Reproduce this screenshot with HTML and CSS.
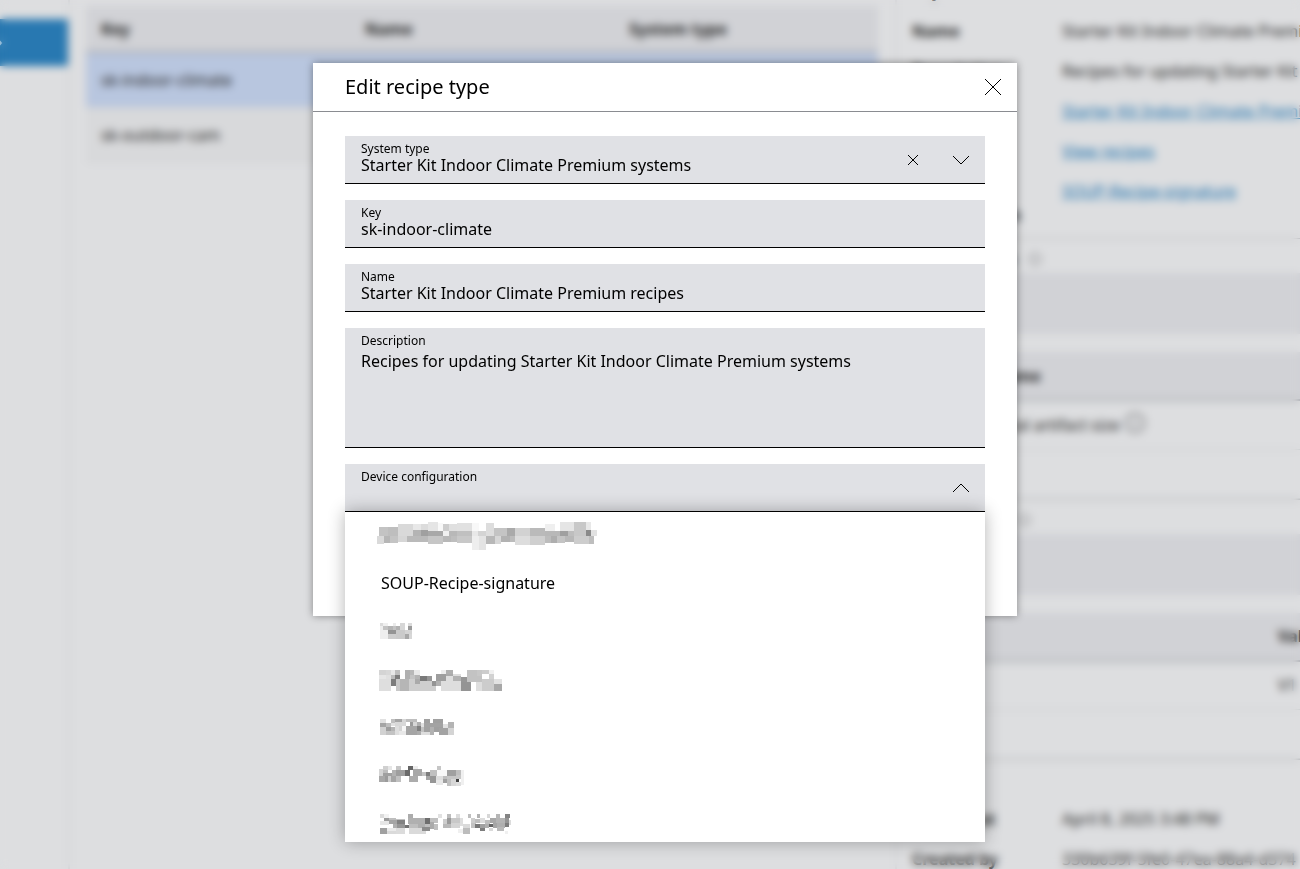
FILE: index.html
```html
<!DOCTYPE html>
<html lang="en">

<head>
    <meta charset="utf-8">
    <title>Edit recipe type</title>
    <link rel="stylesheet" href="styles.css">
</head>

<body>
    <div class="page">
        <nav class="sidebar">
            <a class="sidebar-item" href="#" aria-label="Recipe types">
                <svg width="12" height="12" viewBox="0 0 12 12"><path d="M3 1l5 5-5 5" /></svg>
            </a>
        </nav>
        <main class="list">
            <table class="list-table">
                <thead>
                    <tr>
                        <th>Key</th>
                        <th>Name</th>
                        <th>System type</th>
                    </tr>
                </thead>
                <tbody>
                    <tr class="active">
                        <td>sk-indoor-climate</td>
                        <td></td>
                        <td></td>
                    </tr>
                    <tr>
                        <td>sk-outdoor-cam</td>
                        <td></td>
                        <td></td>
                    </tr>
                </tbody>
            </table>
        </main>
        <aside class="details">
            <dl>
                <dt>Key</dt>
                <dd>sk-indoor-climate</dd>
                <dt>Name</dt>
                <dd>Starter Kit Indoor Climate Premium recipes</dd>
                <dt>Description</dt>
                <dd>Recipes for updating Starter Kit Indoor Climate Premium systems</dd>
                <dt>System type</dt>
                <dd><a href="#">Starter Kit Indoor Climate Premium systems</a></dd>
                <dt>Recipes</dt>
                <dd><a href="#">View recipes</a></dd>
                <dt>Device configuration</dt>
                <dd><a href="#">SOUP-Recipe-signature</a></dd>
            </dl>
            <section>
                <h2>Update settings
                    <svg class="info" width="14" height="14" viewBox="0 0 14 14"><circle cx="7" cy="7" r="6" /><path d="M7 6v4M7 4v1" /></svg>
                </h2>
                <div class="toolbar"></div>
                <table class="props">
                    <tr>
                        <th>Name</th>
                        <th></th>
                    </tr>
                    <tr>
                        <td>Total artifact size
                            <svg class="info big" width="22" height="22" viewBox="0 0 14 14"><circle cx="7" cy="7" r="6" /><path d="M7 6v4M7 4v1" /></svg>
                        </td>
                        <td></td>
                    </tr>
                    <tr>
                        <td></td>
                        <td></td>
                    </tr>
                </table>
            </section>
            <section>
                <h2>User variables
                    <svg class="info" width="14" height="14" viewBox="0 0 14 14"><circle cx="7" cy="7" r="6" /><path d="M7 6v4M7 4v1" /></svg>
                </h2>
                <div class="toolbar"></div>
                <table class="props">
                    <tr>
                        <th></th>
                        <th>Value</th>
                    </tr>
                    <tr>
                        <td></td>
                        <td>V1</td>
                    </tr>
                    <tr>
                        <td></td>
                        <td></td>
                    </tr>
                </table>
            </section>
            <dl class="meta">
                <dt>Created at</dt>
                <dd>April 8, 2025 3:48 PM</dd>
                <dt>Created by</dt>
                <dd>330b639f-5fe0-47ea-88a4-d374</dd>
            </dl>
        </aside>
    </div>

    <div class="overlay">
        <form class="dialog" role="dialog" aria-labelledby="dialog-title">
            <div class="dialog-header">
                <h1 id="dialog-title">Edit recipe type</h1>
                <button type="button" class="icon-button" aria-label="Close">
                    <svg width="16" height="16" viewBox="0 0 16 16"><path d="M0 0l16 16M16 0L0 16" /></svg>
                </button>
            </div>
            <div class="dialog-body">
                <div class="field">
                    <label for="system-type">System type</label>
                    <select id="system-type">
                        <option>Starter Kit Indoor Climate Premium systems</option>
                    </select>
                    <div class="field-icons">
                        <button type="button" class="icon-button" aria-label="Clear">
                            <svg width="10" height="10" viewBox="0 0 10 10"><path d="M0 0l10 10M10 0L0 10" /></svg>
                        </button>
                        <svg width="16" height="8" viewBox="0 0 16 8"><path d="M0 0l8 8 8-8" /></svg>
                    </div>
                </div>
                <div class="field">
                    <label for="key">Key</label>
                    <input type="text" id="key" value="sk-indoor-climate">
                </div>
                <div class="field">
                    <label for="name">Name</label>
                    <input type="text" id="name" value="Starter Kit Indoor Climate Premium recipes">
                </div>
                <div class="field">
                    <label for="description">Description</label>
                    <textarea id="description">Recipes for updating Starter Kit Indoor Climate Premium systems</textarea>
                </div>
                <div class="field">
                    <label for="device-config">Device configuration</label>
                    <select id="device-config">
                        <option></option>
                    </select>
                    <div class="field-icons">
                        <svg width="16" height="8" viewBox="0 0 16 8"><path d="M0 8l8-8 8 8" /></svg>
                    </div>
                    <ul class="options" role="listbox" aria-label="Device configuration">
                        <li role="option"><svg class="masked" viewBox="18 -3 648 96"></svg></li>
                        <li role="option">SOUP-Recipe-signature</li>
                        <li role="option"><svg class="masked" viewBox="18 -9 648 96"></svg></li>
                        <li role="option"><svg class="masked" viewBox="18 135 648 96"></svg></li>
                        <li role="option"><svg class="masked" viewBox="18 279 648 96"></svg></li>
                        <li role="option"><svg class="masked" viewBox="18 423 648 96"></svg></li>
                        <li role="option"><svg class="masked" viewBox="18 567 648 96"></svg></li>
                    </ul>
                </div>
            </div>
        </form>
    </div>
    <script src="script.js"></script>
</body>

</html>
```
FILE: styles.css
```css
* {
    box-sizing: border-box;
}

body {
    margin: 0;
    height: 100vh;
    overflow: hidden;
    background-color: #dddee0;
    color: #000;
    font-family: "Noto Sans", sans-serif;
    font-size: 16px;
    line-height: 24px;
}

h1,
h2,
dl,
dd,
ul {
    margin: 0;
    padding: 0;
}

svg {
    display: block;
    fill: none;
    stroke: #000;
}

/* page behind the dialog, scrolled down a bit */
.page {
    display: flex;
    margin-top: -29px;
    min-height: calc(100vh + 29px);
    color: #222;
}

.sidebar {
    flex: none;
    width: 70px;
    padding-top: 48px;
    border-right: 2px solid #d0d1d4;
}

.sidebar-item {
    display: flex;
    align-items: center;
    height: 47px;
    background-color: #2878b1;
}

.sidebar-item svg {
    margin-left: -7px;
    stroke: #fff;
    stroke-width: 2;
}

.list {
    flex: none;
    width: 825px;
    padding: 35px 17px 0 16px;
}

table {
    border-collapse: collapse;
    table-layout: fixed;
    width: 100%;
}

th,
td {
    padding: 0 15px;
    text-align: left;
    white-space: nowrap;
}

.list-table th {
    height: 46px;
    background-color: #d1d2d6;
    border-bottom: 2px solid #a4a6ab;
}

.list-table td {
    height: 55px;
    background-color: #d8d9db;
    border-bottom: 1px solid #d0d1d4;
}

.list-table .active td {
    background-color: #b8c6df;
}

.details {
    flex: 1;
    min-width: 0;
    overflow: hidden;
    border-left: 2px solid #d3d4d7;
}

dl {
    display: grid;
    grid-template-columns: 134px 1fr;
    column-gap: 16px;
    row-gap: 16px;
    padding: 8px 0 11px 15px;
}

dt,
th {
    font-weight: 700;
}

dd {
    white-space: nowrap;
}

a {
    color: #1c73ae;
}

section {
    border-top: 1px solid #b0b1b5;
}

h2 {
    display: flex;
    align-items: center;
    gap: 12px;
    padding: 8px 0 2px 15px;
    font-size: 14px;
    font-weight: 400;
}

.info {
    stroke: #66676a;
}

.toolbar {
    height: 61px;
    margin-bottom: 18px;
    background-color: #d1d2d6;
}

.props th {
    height: 48px;
    background-color: #d1d2d6;
    border-bottom: 2px solid #a4a6ab;
}

.props td {
    height: 49px;
    border-bottom: 1px solid #c6c8ca;
}

.props tr > :first-child {
    width: 366px;
    padding-left: 96px;
}

.big {
    display: inline-block;
    vertical-align: middle;
    margin-top: -6px;
}

.meta {
    padding-top: 47px;
    border-top: 1px solid #b0b1b5;
}

/* dialog */
.overlay {
    position: fixed;
    inset: 0;
    display: flex;
    justify-content: center;
    align-items: flex-start;
    padding: 63px 0 0 30px;
    backdrop-filter: blur(4px);
}

.dialog {
    width: 100%;
    max-width: 704px;
    background-color: #fff;
    box-shadow: 0 0 8px rgba(0, 0, 0, 0.4);
}

.dialog-header {
    display: flex;
    justify-content: space-between;
    align-items: center;
    height: 49px;
    padding: 0 16px 0 32px;
    border-bottom: 1px solid #8a8c91;
}

.dialog-header h1 {
    font-size: 20px;
    font-weight: 400;
}

.icon-button {
    padding: 0;
    border: none;
    background: none;
    cursor: pointer;
}

.dialog-body {
    display: flex;
    flex-direction: column;
    gap: 16px;
    padding: 24px 32px 104px;
}

.field {
    position: relative;
    background-color: #e0e1e5;
    border-bottom: 1px solid #000;
}

.field label {
    position: absolute;
    top: 5px;
    left: 16px;
    font-size: 12px;
    line-height: 16px;
}

.field input,
.field select,
.field textarea {
    display: block;
    width: 100%;
    height: 47px;
    margin: 0;
    padding: 16px 16px 6px;
    border: none;
    outline: none;
    appearance: none;
    background: none;
    color: #000;
    font: inherit;
}

.field textarea {
    height: 119px;
    padding-top: 21px;
    resize: none;
}

.field-icons {
    position: absolute;
    top: 0;
    right: 16px;
    height: 47px;
    display: flex;
    align-items: center;
    gap: 35px;
}

.options {
    position: absolute;
    top: 47px;
    left: 0;
    right: 0;
    height: 331px;
    overflow: hidden;
    list-style: none;
    background-color: #fff;
    border-top: 1px solid #000;
    box-shadow: 0 0 16px rgba(0, 0, 0, 0.3);
}

.options li {
    display: flex;
    align-items: center;
    height: 48px;
    padding: 0 36px 2px;
}

.masked {
    width: 216px;
    height: 32px;
    overflow: visible;
    stroke: none;
    shape-rendering: crispEdges;
}
```
FILE: script.js
```js
// masked option names: each block is [x, y, width, height, grey level]
var blocks = [
    [
        [12, 21, 27, 27, 195], [39, 21, 30, 27, 190], [69, 12, 45, 36, 217], [114, 12, 24, 18, 232], [138, 12, 21, 18, 220],
        [159, 6, 30, 27, 229], [189, 9, 15, 24, 248], [204, 12, 18, 21, 205], [222, 12, 24, 21, 224], [246, 9, 45, 24, 225],
        [291, 9, 21, 24, 248], [333, 9, 24, 24, 221], [357, 24, 39, 24, 196], [396, 24, 24, 24, 170], [420, 24, 45, 24, 210],
        [465, 24, 45, 24, 186], [510, 12, 30, 21, 239], [555, 6, 42, 27, 229], [597, 6, 36, 42, 200], [633, 6, 15, 24, 232],
        [114, 30, 24, 18, 180], [138, 30, 21, 18, 160], [159, 33, 45, 15, 168], [204, 33, 18, 15, 240], [222, 33, 24, 15, 184],
        [246, 33, 45, 15, 192], [291, 33, 18, 15, 232], [309, 33, 24, 15, 212], [333, 33, 24, 15, 222], [510, 33, 45, 15, 184],
        [555, 33, 24, 15, 160], [579, 33, 18, 15, 190], [633, 30, 15, 18, 138], [648, 30, 18, 18, 226],
        [6, 48, 21, 24, 218], [27, 48, 18, 21, 182], [45, 48, 24, 21, 196], [69, 48, 27, 18, 214], [96, 48, 63, 18, 186],
        [159, 48, 45, 24, 198], [204, 48, 24, 18, 184], [228, 48, 18, 18, 190], [246, 48, 45, 21, 200], [291, 48, 21, 42, 238],
        [312, 48, 21, 42, 228], [333, 48, 27, 24, 184], [360, 48, 18, 24, 215], [378, 48, 27, 18, 178], [405, 48, 15, 18, 188],
        [420, 48, 45, 27, 221], [465, 48, 45, 27, 207], [510, 48, 18, 21, 188], [528, 48, 18, 21, 174], [546, 48, 24, 21, 196],
        [570, 48, 27, 18, 184], [597, 48, 45, 24, 205], [642, 48, 15, 24, 190]
    ],
    [
        [15, 15, 9, 9, 220], [24, 15, 15, 9, 240], [54, 15, 9, 9, 235], [75, 15, 15, 21, 215], [99, 15, 12, 9, 220],
        [15, 24, 24, 39, 238], [24, 24, 15, 12, 195], [39, 24, 15, 12, 180], [54, 24, 9, 12, 195], [63, 24, 12, 12, 178],
        [99, 24, 12, 12, 155], [39, 36, 24, 12, 148], [63, 36, 27, 27, 202], [39, 48, 24, 15, 205], [90, 36, 21, 12, 212],
        [90, 48, 12, 15, 168], [102, 48, 9, 15, 215]
    ],
    [
        [12, 156, 21, 15, 212], [33, 156, 15, 15, 216], [48, 156, 12, 15, 232], [60, 156, 15, 15, 190], [90, 156, 15, 27, 176],
        [105, 156, 12, 15, 184], [117, 156, 18, 15, 232], [198, 156, 15, 12, 238], [213, 156, 21, 12, 175], [276, 156, 30, 18, 195],
        [306, 156, 15, 18, 200], [321, 156, 21, 12, 205], [342, 156, 15, 12, 240],
        [12, 171, 21, 12, 230], [33, 171, 15, 12, 224], [48, 171, 12, 12, 188], [60, 171, 15, 12, 125], [105, 171, 15, 12, 195],
        [120, 171, 15, 12, 180], [135, 174, 21, 15, 122], [156, 174, 15, 15, 150], [183, 168, 30, 21, 158], [234, 174, 24, 15, 178],
        [258, 177, 18, 15, 150], [276, 174, 45, 18, 195], [342, 168, 15, 15, 210],
        [12, 183, 36, 36, 222], [48, 183, 15, 21, 125], [63, 183, 12, 36, 200], [75, 183, 27, 36, 182], [102, 183, 18, 36, 206],
        [120, 183, 15, 15, 170], [120, 198, 15, 21, 206], [135, 189, 36, 30, 206], [171, 189, 12, 15, 148], [171, 204, 12, 15, 206],
        [183, 189, 15, 15, 176], [198, 189, 15, 30, 222], [213, 168, 45, 51, 222], [213, 168, 21, 6, 170], [234, 174, 24, 15, 178],
        [258, 192, 30, 27, 148], [303, 192, 18, 27, 222], [321, 183, 36, 36, 204], [357, 183, 24, 15, 226], [357, 198, 24, 21, 168]
    ],
    [
        [15, 303, 18, 12, 225], [48, 303, 12, 12, 192], [60, 303, 21, 9, 165], [81, 303, 12, 9, 215], [93, 303, 33, 9, 190],
        [147, 303, 18, 12, 160], [174, 303, 30, 12, 160],
        [15, 315, 18, 12, 165], [33, 315, 15, 12, 190], [48, 315, 12, 9, 225], [60, 312, 33, 12, 216], [105, 312, 9, 12, 155],
        [114, 312, 12, 12, 215], [126, 312, 12, 12, 175], [138, 315, 9, 12, 225], [147, 315, 57, 15, 163], [219, 312, 18, 18, 180],
        [15, 327, 18, 24, 210], [33, 327, 15, 12, 158], [48, 327, 12, 12, 180], [33, 339, 27, 12, 195], [60, 324, 12, 27, 222],
        [72, 324, 9, 15, 212], [81, 324, 12, 15, 246], [72, 339, 21, 12, 232], [93, 324, 33, 27, 165], [126, 324, 12, 15, 128],
        [126, 339, 12, 12, 172], [138, 327, 9, 15, 195], [138, 342, 27, 9, 222], [147, 327, 18, 15, 162], [165, 327, 12, 24, 178],
        [177, 327, 27, 15, 160], [192, 330, 27, 21, 163], [204, 318, 15, 12, 225], [219, 330, 18, 21, 212]
    ],
    [
        [24, 444, 15, 21, 208], [39, 444, 12, 12, 230], [63, 444, 15, 12, 198], [99, 444, 15, 12, 100], [114, 444, 15, 9, 238],
        [186, 444, 12, 12, 198],
        [12, 453, 12, 21, 212], [24, 456, 15, 9, 190], [51, 456, 12, 18, 178], [63, 456, 27, 18, 158], [90, 456, 15, 18, 106],
        [114, 453, 27, 21, 168], [165, 456, 21, 18, 192], [186, 456, 30, 18, 248], [216, 456, 27, 18, 160], [243, 456, 15, 15, 190],
        [258, 456, 9, 45, 240],
        [24, 465, 27, 9, 160], [12, 474, 18, 18, 168], [30, 474, 9, 18, 155], [39, 474, 9, 18, 205], [48, 474, 15, 18, 165],
        [63, 474, 15, 18, 192], [102, 474, 27, 18, 172], [141, 462, 12, 12, 195], [153, 462, 12, 12, 125], [153, 474, 12, 12, 165],
        [165, 474, 18, 21, 150], [183, 474, 21, 12, 222], [183, 486, 21, 15, 232], [204, 474, 12, 9, 190], [204, 483, 12, 12, 160],
        [216, 474, 27, 9, 198], [216, 483, 12, 21, 192], [228, 483, 15, 21, 215], [243, 471, 15, 12, 198], [243, 483, 9, 9, 65],
        [243, 492, 15, 12, 222]
    ],
    [
        [15, 588, 12, 12, 220], [27, 588, 15, 12, 242], [99, 588, 15, 12, 172], [189, 588, 12, 12, 225], [216, 588, 12, 12, 188],
        [243, 588, 12, 12, 220], [279, 588, 9, 12, 190], [306, 588, 9, 12, 178], [336, 588, 9, 12, 215], [363, 588, 12, 12, 182],
        [390, 588, 15, 12, 132],
        [27, 600, 15, 9, 155], [42, 600, 21, 9, 190], [63, 603, 27, 12, 195], [99, 600, 51, 18, 176], [150, 600, 15, 18, 110],
        [165, 600, 24, 15, 192], [204, 603, 12, 15, 205], [216, 600, 12, 18, 155], [228, 600, 27, 15, 200], [255, 600, 9, 24, 222],
        [288, 600, 12, 15, 205], [300, 603, 15, 12, 190], [315, 600, 15, 15, 220], [330, 606, 15, 12, 190], [345, 600, 18, 15, 168],
        [363, 600, 27, 15, 180], [390, 600, 12, 15, 148], [402, 606, 6, 15, 220],
        [15, 609, 27, 12, 230], [42, 606, 24, 12, 165], [66, 606, 24, 12, 130], [54, 618, 12, 12, 175], [66, 618, 24, 12, 150],
        [90, 621, 12, 9, 115], [102, 618, 27, 12, 190], [129, 615, 21, 15, 175], [150, 618, 15, 9, 190], [165, 612, 12, 21, 170],
        [177, 618, 12, 18, 192], [204, 618, 24, 12, 185], [228, 615, 27, 15, 212], [264, 618, 21, 15, 218], [288, 615, 15, 15, 195],
        [300, 618, 15, 12, 120], [315, 618, 15, 12, 160], [330, 618, 12, 12, 175], [342, 618, 12, 9, 100], [354, 615, 12, 15, 165],
        [366, 615, 24, 15, 175], [390, 615, 12, 12, 125],
        [15, 630, 21, 18, 160], [36, 630, 30, 9, 235], [36, 639, 27, 9, 218], [63, 630, 27, 18, 220], [102, 630, 51, 18, 218],
        [141, 627, 24, 12, 140], [249, 633, 15, 12, 240], [264, 630, 21, 18, 188], [315, 630, 15, 9, 125], [342, 630, 12, 9, 218],
        [366, 627, 21, 12, 185], [390, 639, 9, 9, 240]
    ]
];

var masked = document.querySelectorAll(".masked");

for (var i = 0; i < masked.length; i++) {
    for (var j = 0; j < blocks[i].length; j++) {
        var b = blocks[i][j];
        var rect = document.createElementNS("http://www.w3.org/2000/svg", "rect");
        rect.setAttribute("x", b[0]);
        rect.setAttribute("y", b[1]);
        rect.setAttribute("width", b[2]);
        rect.setAttribute("height", b[3]);
        rect.setAttribute("fill", "rgb(" + b[4] + "," + b[4] + "," + b[4] + ")");
        masked[i].appendChild(rect);
    }
}
```
